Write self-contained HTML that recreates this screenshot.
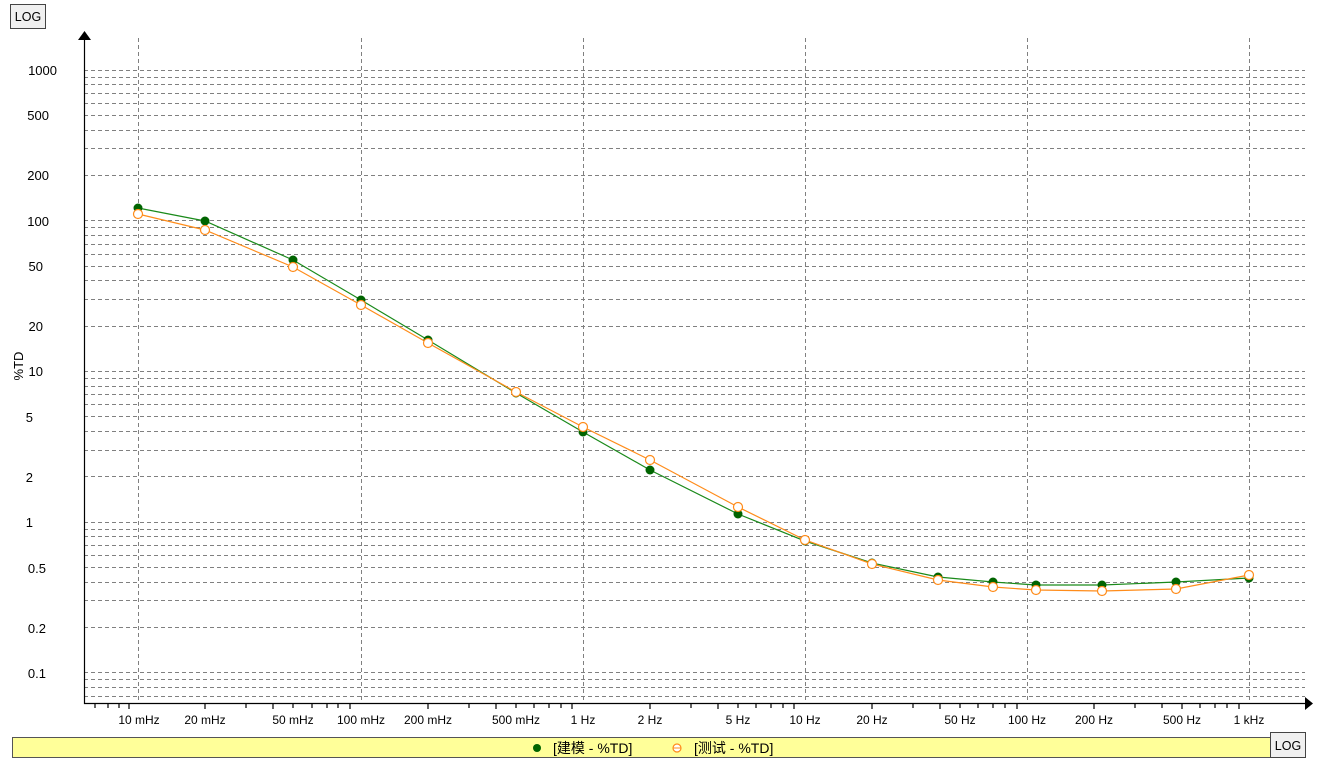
<!DOCTYPE html>
<html><head><meta charset="utf-8"><style>
html,body{margin:0;padding:0;background:#fff;width:1318px;height:770px;overflow:hidden}
svg{display:block;font-family:"Liberation Sans","Noto Sans CJK SC",sans-serif}
</style></head><body>
<svg width="1318" height="770" viewBox="0 0 1318 770">
<rect width="1318" height="770" fill="#fff"/>
<rect x="10.5" y="4.5" width="35" height="24" fill="#f0f0f0" stroke="#444"/>
<text x="28" y="21" font-size="12.5" text-anchor="middle">LOG</text>
<g stroke="#808080" stroke-dasharray="4,3" stroke-width="1" fill="none">
<path d="M84 70.5H1305M84 77.5H1305M84 84.5H1305M84 93.5H1305M84 103.5H1305M84 115.5H1305M84 130.5H1305M84 148.5H1305M84 175.5H1305
M84 220.5H1305M84 227.5H1305M84 235.5H1305M84 244.5H1305M84 254.5H1305M84 266.5H1305M84 280.5H1305M84 299.5H1305M84 326.5H1305
M84 371.5H1305M84 378.5H1305M84 386.5H1305M84 394.5H1305M84 404.5H1305M84 416.5H1305M84 431.5H1305M84 450.5H1305M84 476.5H1305
M84 522.5H1305M84 529.5H1305M84 536.5H1305M84 545.5H1305M84 555.5H1305M84 567.5H1305M84 582.5H1305M84 600.5H1305M84 627.5H1305
M84 672.5H1305M84 679.5H1305M84 687.5H1305M84 696.5H1305"/>
<path d="M138.5 38V703M361.5 38V703M583.5 38V703M805.5 38V703M1027.5 38V703M1249.5 38V703"/>
</g>
<g stroke="#000" stroke-width="1.2" fill="none">
<path d="M84.5 40V703.5H1305"/>
<path d="M95 703v5M108 703v5M119 703v5M129 703v6M205 703v6M246 703v5M273 703v6M293 703v5M312 703v5M327 703v5M338 703v5M350 703v6M428 703v6M469 703v5M496 703v6M516 703v5M534 703v5M549 703v5M561 703v5M572 703v6M650 703v6M691 703v5M718 703v6M738 703v5M756 703v5M771 703v5M783 703v5M794 703v6M872 703v6M913 703v5M940 703v6M960 703v5M978 703v5M993 703v5M1005 703v5M1017 703v6M1094 703v6M1135 703v5M1162 703v5M1182 703v6M1200 703v5M1215 703v5M1227 703v5M1239 703v6"/>
</g>
<path d="M78 40L84.5 31L91 40Z" fill="#000"/>
<path d="M1305 697L1313 703.5L1305 710Z" fill="#000"/>
<g font-size="13" fill="#000" text-anchor="end">
<text x="57" y="75">1000</text><text x="49" y="120">500</text><text x="49" y="180">200</text>
<text x="49" y="226">100</text><text x="43" y="271">50</text><text x="43" y="331">20</text>
<text x="43" y="376">10</text><text x="33" y="422">5</text><text x="33" y="482">2</text>
<text x="33" y="527">1</text><text x="46" y="573">0.5</text><text x="46" y="633">0.2</text><text x="46" y="678">0.1</text>
</g>
<text transform="translate(23,366) rotate(-90)" font-size="13" text-anchor="middle">%TD</text>
<g font-size="12" text-anchor="middle">
<text x="139" y="724">10 mHz</text><text x="205" y="724">20 mHz</text><text x="293" y="724">50 mHz</text>
<text x="361" y="724">100 mHz</text><text x="428" y="724">200 mHz</text><text x="516" y="724">500 mHz</text>
<text x="583" y="724">1 Hz</text><text x="650" y="724">2 Hz</text><text x="738" y="724">5 Hz</text>
<text x="805" y="724">10 Hz</text><text x="872" y="724">20 Hz</text><text x="960" y="724">50 Hz</text>
<text x="1027" y="724">100 Hz</text><text x="1094" y="724">200 Hz</text><text x="1182" y="724">500 Hz</text>
<text x="1249" y="724">1 kHz</text>
</g>
<polyline fill="none" stroke="#1a8a1a" stroke-width="1.2" points="138,208 205,221 293,260 361,300 428,340 516,393 583,432 650,470 738,514 805,541 872,563 938,577 993,582 1036,585 1102,585 1176,582 1249,578"/>
<polyline fill="none" stroke="#ff8c1a" stroke-width="1.2" points="138,214 205,230 293,267 361,305 428,343 516,392 583,427 650,460 738,507 805,540 872,564 938,580 993,587 1036,590 1102,591 1176,589 1249,575"/>
<g fill="#006400">
<circle cx="138" cy="208" r="4.5"/><circle cx="205" cy="221" r="4.5"/><circle cx="293" cy="260" r="4.5"/><circle cx="361" cy="300" r="4.5"/><circle cx="428" cy="340" r="4.5"/><circle cx="516" cy="393" r="4.5"/><circle cx="583" cy="432" r="4.5"/><circle cx="650" cy="470" r="4.5"/><circle cx="738" cy="514" r="4.5"/><circle cx="805" cy="541" r="4.5"/><circle cx="872" cy="563" r="4.5"/><circle cx="938" cy="577" r="4.5"/><circle cx="993" cy="582" r="4.5"/><circle cx="1036" cy="585" r="4.5"/><circle cx="1102" cy="585" r="4.5"/><circle cx="1176" cy="582" r="4.5"/><circle cx="1249" cy="578" r="4.5"/>
</g>
<g fill="#fff" stroke="#ff8c1a" stroke-width="1.2">
<circle cx="138" cy="214" r="4.5"/><circle cx="205" cy="230" r="4.5"/><circle cx="293" cy="267" r="4.5"/><circle cx="361" cy="305" r="4.5"/><circle cx="428" cy="343" r="4.5"/><circle cx="516" cy="392" r="4.5"/><circle cx="583" cy="427" r="4.5"/><circle cx="650" cy="460" r="4.5"/><circle cx="738" cy="507" r="4.5"/><circle cx="805" cy="540" r="4.5"/><circle cx="872" cy="564" r="4.5"/><circle cx="938" cy="580" r="4.5"/><circle cx="993" cy="587" r="4.5"/><circle cx="1036" cy="590" r="4.5"/><circle cx="1102" cy="591" r="4.5"/><circle cx="1176" cy="589" r="4.5"/><circle cx="1249" cy="575" r="4.5"/>
</g>
<rect x="12.5" y="737.5" width="1258" height="20" fill="#ffff99" stroke="#555"/>
<rect x="1270.5" y="732.5" width="35" height="25" fill="#f0f0f0" stroke="#444"/>
<text x="1288" y="750" font-size="12.5" text-anchor="middle">LOG</text>
<circle cx="537" cy="748" r="4" fill="#006400"/>
<circle cx="677" cy="748" r="4" fill="#fff" stroke="#ff8c1a" stroke-width="1.2"/>
<line x1="673" y1="748" x2="681" y2="748" stroke="#ff8c1a"/>
<text x="553" y="753" font-size="14">[建模 - %TD]</text>
<text x="694" y="753" font-size="14">[测试 - %TD]</text>
</svg>
</body></html>
